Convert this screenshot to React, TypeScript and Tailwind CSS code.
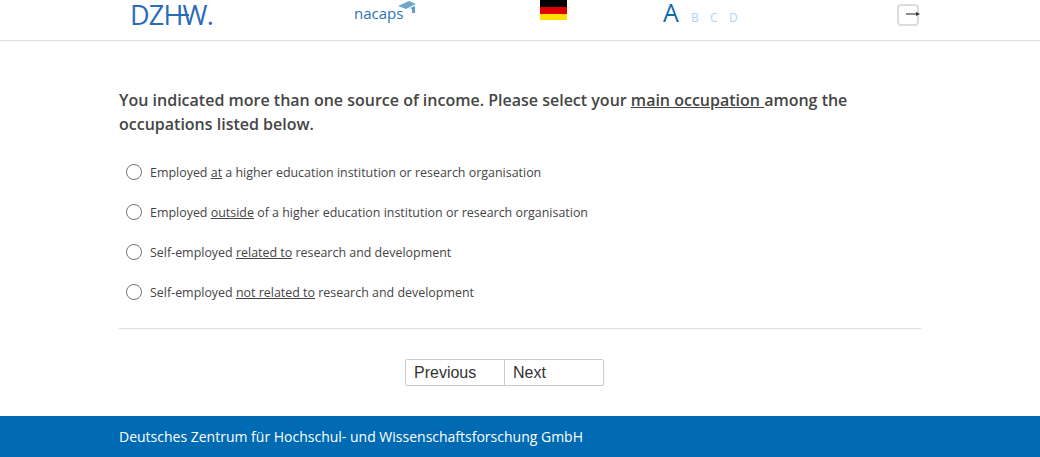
import React from 'react'

const options: { before: string; mark: string; after: string }[] = [
  { before: 'Employed ', mark: 'at', after: ' a higher education institution or research organisation' },
  { before: 'Employed ', mark: 'outside', after: ' of a higher education institution or research organisation' },
  { before: 'Self-employed ', mark: 'related to', after: ' research and development' },
  { before: 'Self-employed ', mark: 'not related to', after: ' research and development' },
]

function Header() {
  return (
    <header className="flex h-[41px] items-start border-b border-[#dedede] pl-[130px]">
      {/* DZHW logo */}
      <div className="relative w-[224px] font-['Open_Sans',sans-serif] text-[27px] leading-[29px] font-normal tracking-[-0.8px] text-[#2a6cb8]">
        DZHW.
        <div className="absolute top-[14px] left-[50px] h-[2px] w-[9px] bg-[#2a6cb8]" />
      </div>
      {/* nacaps logo */}
      <div className="relative w-[186px]">
        <span className="mt-[3px] block font-['Open_Sans',sans-serif] text-[15px] leading-[20px] text-[#2a74b0]">
          nacaps
        </span>
        <svg className="absolute top-0 left-[43px]" width="20" height="15" viewBox="0 0 20 15">
          <path d="M1 6 L12 1 L19 4 L9 9 Z" fill="#6fa9c9" />
          <path d="M13 8 L18 6 V13 H15 V9 Z" fill="#5b9dc0" />
        </svg>
      </div>
      {/* language flag */}
      <div className="flex h-5 w-[27px] flex-col">
        <div className="h-[6.5px] bg-black" />
        <div className="h-[7px] bg-[#e00000]" />
        <div className="h-[6.5px] bg-[#ffde00]" />
      </div>
      {/* font size switch */}
      <div className="ml-[96px] flex w-[234px] items-baseline font-['Open_Sans',sans-serif] text-[#b2d3ec]">
        <span className="w-[28px] text-[25px] leading-[24px] text-[#0a6ab4]">A</span>
        <span className="w-[19px] text-[12px]">B</span>
        <span className="w-[19px] text-[12px]">C</span>
        <span className="text-[12px]">D</span>
      </div>
      {/* exit */}
      <div className="relative mt-1 h-[22px] w-[22px] rounded-[4px] border-2 border-[#dcdcdc]">
        <svg className="absolute top-[3px] left-[6px]" width="18" height="10" viewBox="0 0 18 10">
          <path d="M1 5 H12" stroke="#444" strokeWidth="1.2" />
          <path d="M11 3 L15 5 L11 7 Z" fill="#333" />
        </svg>
      </div>
    </header>
  )
}

export default function App() {
  return (
    <div className="flex h-[457px] w-[1040px] flex-col bg-white font-['Open_Sans',sans-serif] text-[#454545]">
      <Header />
      <main className="mx-auto flex w-[802px] flex-1 flex-col">
        <h1 className="mt-[47px] text-[16px] leading-6 font-semibold">
          You indicated more than one source of income. Please select your <u>main occupation </u>among the occupations
          listed below.
        </h1>
        <div className="mt-[17px] flex flex-col">
          {options.map((o) => (
            <label key={o.mark} className="flex h-10 items-center pl-[7px] text-[12.45px]">
              <span className="mb-[2px] h-4 w-4 rounded-full border border-[#767676] bg-white" />
              <span className="ml-2">
                {o.before}
                <u>{o.mark}</u>
                {o.after}
              </span>
            </label>
          ))}
        </div>
        <hr className="mt-[15px] border-[#dedede]" />
        <div className="mt-[30px] flex pl-[286px] font-['Liberation_Sans',sans-serif] text-[16px] text-[#333]">
          <button type="button" className="h-[27px] w-[100px] rounded-l-[2px] border border-[#ccc] pl-2 text-left">
            Previous
          </button>
          <button type="button" className="-ml-px h-[27px] w-[100px] rounded-r-[2px] border border-[#ccc] pl-2 text-left">
            Next
          </button>
        </div>
      </main>
      <footer className="flex h-[41px] items-center bg-[#006ab2] pl-[119px] text-[14px] text-white">
        Deutsches Zentrum für Hochschul- und Wissenschaftsforschung GmbH
      </footer>
    </div>
  )
}
